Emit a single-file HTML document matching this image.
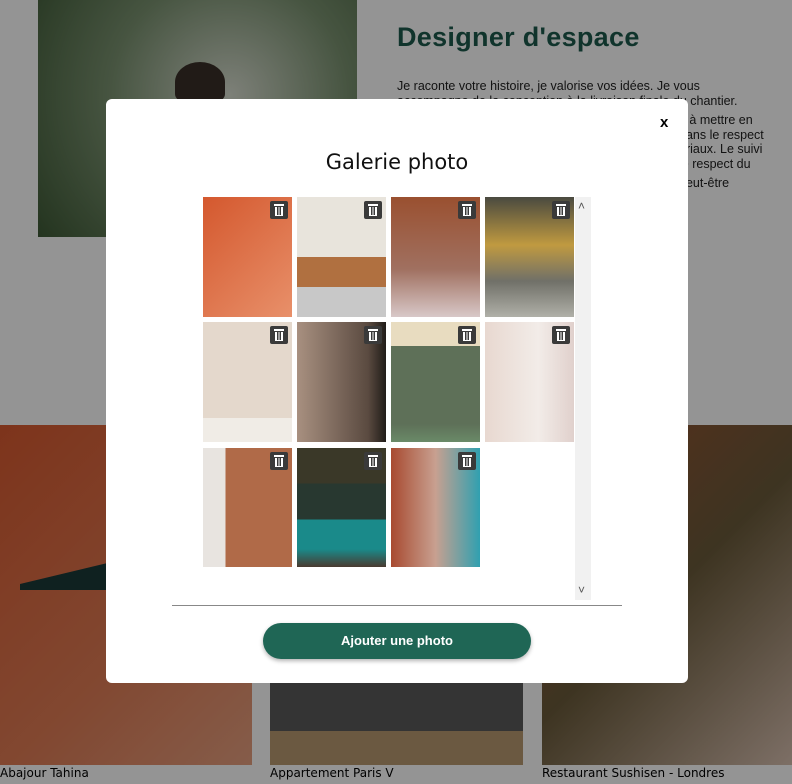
<!DOCTYPE html>
<html><head><meta charset="utf-8"><style>
*{margin:0;padding:0;box-sizing:border-box}
body{width:792px;height:784px;overflow:hidden;position:relative;background:#fff;font-family:"Liberation Sans",sans-serif}
.abs{position:absolute}
.cap{position:absolute;top:766px;font-size:12px;color:#000;font-family:"DejaVu Sans","Liberation Sans",sans-serif}
.ov{position:absolute;left:0;top:0;width:792px;height:784px;background:rgba(0,0,0,0.42)}
.modal{position:absolute;left:106px;top:99px;width:582px;height:584px;background:#fff;border-radius:6px}
.t{position:absolute;width:89px;height:120px}
.bin{position:absolute;right:4px;top:4px;width:18px;height:18px;background:#3a3a3a;border-radius:2px}
.bin:before{content:"";position:absolute;left:4px;top:3px;width:10px;height:2px;background:#fff}
.bin:after{content:"";position:absolute;left:5px;top:6px;width:6px;height:8px;border:1px solid #fff;border-top:none;background:repeating-linear-gradient(90deg,#fff 0 1px,transparent 1px 2.5px)}
.tx span{margin-left:282px}
</style></head><body>
<div class="abs" style="left:38px;top:0;width:319px;height:237px;background:radial-gradient(circle at 60% 40%,#d8ddd0,#7a9270 50%,#3e5a36)"></div>
<div class="abs" style="left:175px;top:62px;width:50px;height:40px;border-radius:50% 50% 20% 20%;background:#3a3028"></div>
<div class="abs" style="left:397px;top:22px;font-size:27px;font-weight:bold;color:#1d5a4c;letter-spacing:0.3px">Designer d'espace</div>
<div class="abs tx" style="left:397px;top:79px;width:390px;font-size:12.5px;line-height:14.5px;color:#222">Je raconte votre histoire, je valorise vos idées. Je vous<br>accompagne de la conception à la livraison finale du chantier.<br><div style="height:5px"></div><span>n à mettre en</span><br><span>dans le respect</span><br><span>ériaux. Le suivi</span><br><span>le respect du</span><br><div style="height:5px"></div><span>peut-être</span></div>
<div class="abs" style="left:0;top:425px;width:252px;height:340px;background:linear-gradient(135deg,#d85a30,#e07c55 60%,#e6a080)"></div>
<div class="abs" style="left:20px;top:560px;width:100px;height:30px;background:#1a3a38;clip-path:polygon(0 80%,100% 0,100% 100%,0 100%)"></div>
<div class="abs" style="left:270px;top:425px;width:253px;height:340px;background:linear-gradient(#ddd 0 70%,#5a5a5a 70% 90%,#b89a70 90%)"></div>
<div class="abs" style="left:542px;top:425px;width:250px;height:340px;background:linear-gradient(135deg,#a0502e,#6a5a3a 50%,#d8c0b0)"></div>
<div class="cap" style="left:0">Abajour Tahina</div>
<div class="cap" style="left:270px">Appartement Paris V</div>
<div class="cap" style="left:542px">Restaurant Sushisen - Londres</div>
<div class="ov"></div>
<div class="modal">
<div class="abs" style="left:554px;top:15px;font-size:15px;font-weight:bold">x</div>
<div class="abs" style="left:0;width:582px;top:51px;text-align:center;font-size:21px;font-family:'DejaVu Sans',sans-serif;color:#111">Galerie photo</div>
<div class="abs" style="left:469px;top:98px;width:16px;height:403px;background:#f1f1f1"></div>
<div class="abs" style="left:472px;top:100px;font-size:12px;color:#555">&#708;</div>
<div class="abs" style="left:472px;top:484px;font-size:12px;color:#555">&#709;</div>
<div class="t" style="left:97px;top:98px;background:linear-gradient(135deg,#d4582e,#e8906a)"><div class="bin"></div></div>
<div class="t" style="left:191px;top:98px;background:linear-gradient(#e8e4dc 0 50%,#b07040 50% 75%,#c8c8c8 75%)"><div class="bin"></div></div>
<div class="t" style="left:285px;top:98px;background:linear-gradient(#9a5030,#a07060 60%,#d8c8c8)"><div class="bin"></div></div>
<div class="t" style="left:379px;top:98px;background:linear-gradient(#4a4a40,#c09a40 40%,#707068 70%,#b0b0a8)"><div class="bin"></div></div>
<div class="t" style="left:97px;top:223px;background:linear-gradient(#e4d8cc 0 80%,#f0ece6 80%)"><div class="bin"></div></div>
<div class="t" style="left:191px;top:223px;background:linear-gradient(90deg,#a89080,#5a4a40 80%,#201c18)"><div class="bin"></div></div>
<div class="t" style="left:285px;top:223px;background:linear-gradient(#e8dcc0 0 20%,#5e7058 20% 85%,#6a8a68)"><div class="bin"></div></div>
<div class="t" style="left:379px;top:223px;background:linear-gradient(90deg,#e8d8d0,#f2ece8 60%,#e0d0cc)"><div class="bin"></div></div>
<div class="t" style="left:97px;top:349px;height:119px;background:linear-gradient(90deg,#e8e4e0 0 25%,#b06a48 25%)"><div class="bin"></div></div>
<div class="t" style="left:191px;top:349px;height:119px;background:linear-gradient(#3a3828 0 30%,#283830 30% 60%,#1a8a8a 60% 85%,#4a3a30)"><div class="bin"></div></div>
<div class="t" style="left:285px;top:349px;height:119px;background:linear-gradient(90deg,#a84a30,#c8a090 50%,#30a0b0)"><div class="bin"></div></div>
<div class="abs" style="left:66px;top:506px;width:450px;height:1px;background:#888"></div>
<div class="abs" style="left:157px;top:524px;width:268px;height:36px;border-radius:18px;background:#1f6655;color:#fff;font-size:13px;font-weight:bold;text-align:center;line-height:36px;box-shadow:0 2px 4px rgba(0,0,0,.3)">Ajouter une photo</div>
</div>
</body></html>
